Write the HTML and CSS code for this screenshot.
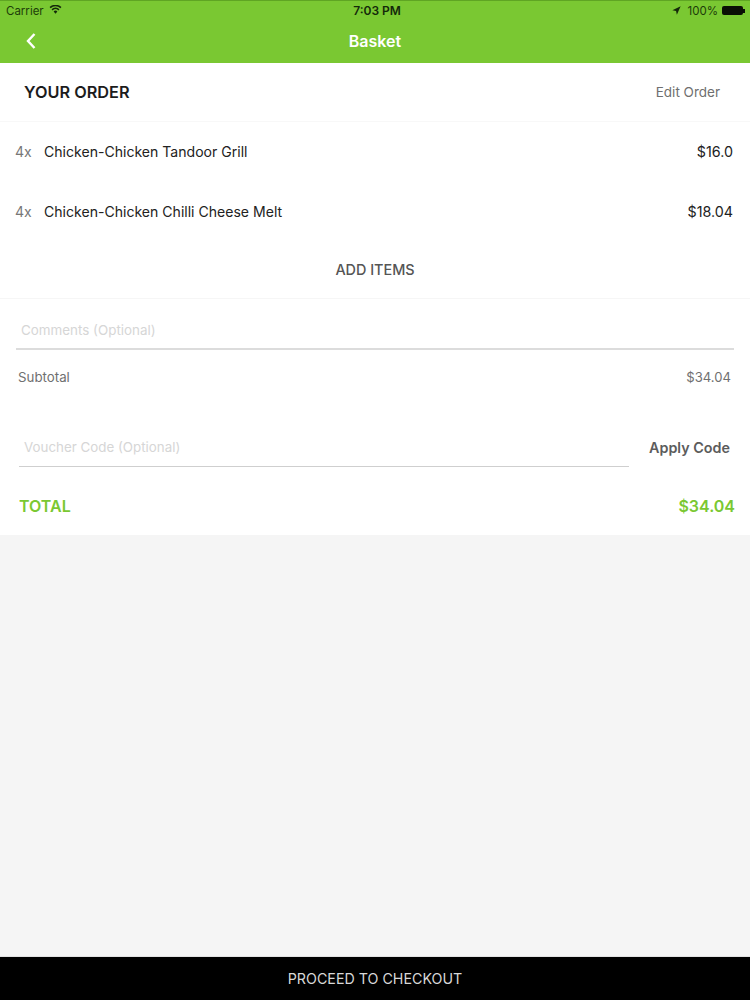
FILE: index.html
```html
<!DOCTYPE html>
<html lang="en">
<head>
<meta charset="utf-8">
<title>Basket</title>
<link rel="stylesheet" href="styles.css">
</head>
<body>
<div class="app">
  <header class="header">
    <div class="status">
      <div class="status-side">
        <span>Carrier</span>
        <svg class="wifi" viewBox="0 0 14 10" width="13" height="9"><path d="M7 9.6 4.9 7.2a3 3 0 0 1 4.2 0zM3.8 6 2.6 4.7a6.3 6.3 0 0 1 8.8 0L10.2 6a4.6 4.6 0 0 0-6.4 0zM1.6 3.6.4 2.3a9.5 9.5 0 0 1 13.2 0l-1.2 1.3a7.8 7.8 0 0 0-10.8 0z"/></svg>
      </div>
      <div class="status-time">7:03 PM</div>
      <div class="status-side status-right">
        <svg class="arrow" viewBox="0 0 10 10" width="9" height="9"><path d="M9.6.4 5.4 9.6 4.5 5.5.4 4.6z"/></svg>
        <span>100%</span>
        <div class="battery"><div class="battery-body"></div><div class="battery-tip"></div></div>
      </div>
    </div>
    <div class="nav">
      <svg class="back" viewBox="0 0 12 18" width="12" height="18"><path d="M9.5 2 3 9l6.500 7" fill="none" stroke="#fff" stroke-width="2.400"/></svg>
      <div class="nav-title">Basket</div>
    </div>
  </header>

  <main class="main">
    <section class="card">
      <div class="order-head">
        <h1 class="order-title">YOUR ORDER</h1>
        <span class="edit">Edit Order</span>
      </div>
      <div class="item">
        <span class="qty">4x</span>
        <span class="name">Chicken-Chicken Tandoor Grill</span>
        <span class="price">$16.0</span>
      </div>
      <div class="item">
        <span class="qty">4x</span>
        <span class="name">Chicken-Chicken Chilli Cheese Melt</span>
        <span class="price">$18.04</span>
      </div>
      <div class="add">ADD ITEMS</div>
      <div class="comments">Comments (Optional)</div>
      <div class="subtotal"><span class="subtotal-label">Subtotal</span><span>$34.04</span></div>
      <div class="voucher">
        <div class="voucher-field">Voucher Code (Optional)</div>
        <span class="apply">Apply Code</span>
      </div>
      <div class="total"><span class="total-label">TOTAL</span><span class="total-value">$34.04</span></div>
    </section>
  </main>

  <footer class="checkout">PROCEED TO CHECKOUT</footer>
</div>
</body>
</html>
```
FILE: styles.css
```css
* { box-sizing: border-box; }
html, body { margin: 0; padding: 0; }
body { font-family: Inter, "Liberation Sans", sans-serif; background: #f5f5f5; }
.app { width: 750px; height: 1000px; display: flex; flex-direction: column; overflow: hidden; }

.header { height: 63px; background: #7ac832; border-top: 1px solid #5fa523; flex: none; }
.status { height: 19px; padding: 0 5px 0 6px; display: flex; align-items: center; justify-content: space-between; position: relative; font-size: 11.500px; color: #1d3d09; }
.status-side { display: flex; align-items: center; gap: 5px; }
.status-right { gap: 4px; }
.status-time { position: absolute; left: 4px; right: 0; text-align: center; font-size: 12px; font-weight: 600; color: #14290a; }
.wifi { fill: #14290a; margin-bottom: 2px; }
.arrow { fill: #14290a; margin-right: 3px; }
.battery { display: flex; align-items: center; }
.battery-body { width: 21px; height: 9px; background: #0a0f05; border-radius: 2px; }
.battery-tip { width: 2px; height: 4px; background: #0a0f05; }

.nav { height: 43px; padding-bottom: 2px; position: relative; display: flex; align-items: center; justify-content: center; }
.back { position: absolute; left: 25px; top: 12px; }
.nav-title { color: #fff; font-size: 16px; font-weight: 600; }

.main { flex: 1; }
.card { background: #fff; height: 472px; display: flex; flex-direction: column; }

.order-head { height: 59px; padding: 0 30px 0 24px; display: flex; align-items: center; justify-content: space-between; border-bottom: 1px solid #f8f8f8; }
.order-title { margin: 0; font-size: 16.300px; font-weight: 600; color: #1c1c1c; }
.edit { font-size: 13.500px; color: #6f6f6f; }

.item { height: 59.400px; padding: 0 17px 0 15px; display: flex; align-items: center; font-size: 14.070px; color: #222; }
.qty { width: 29px; color: #777; }
.name { flex: 1; }
.price { font-size: 14.300px; }

.add { height: 58.200px; padding-top: 1px; display: flex; align-items: center; justify-content: center; font-size: 14.400px; font-weight: 500; color: #555; border-bottom: 1px solid #f6f6f6; }

.comments { margin: 0 16px; height: 51px; padding: 23px 0 0 5px; font-size: 13.400px; color: #d6d6d6; border-bottom: 2px solid #dcdcdc; }
.subtotal { height: 54px; padding: 0 19px 0 18px; margin-bottom: 1px; display: flex; align-items: center; justify-content: space-between; font-size: 13.100px; color: #707070; }
.subtotal-label { font-size: 13.300px; }

.voucher { height: 62px; padding: 0 20px 0 19px; display: flex; align-items: flex-start; justify-content: space-between; }
.voucher-field { width: 610px; height: 62px; padding: 34px 0 0 5px; font-size: 13.350px; color: #d6d6d6; border-bottom: 1px solid #cfcfcf; }
.apply { font-size: 14.350px; font-weight: 600; color: #5c5c5c; padding-top: 34px; }

.total { flex: 1; padding: 10px 15px 0 19px; display: flex; align-items: center; justify-content: space-between; font-size: 16px; font-weight: 600; color: #7ac832; }

.checkout { height: 44px; flex: none; background: #000; border-top: 1px solid #e2e2e2; color: #d8d8d8; font-size: 14.250px; display: flex; align-items: center; justify-content: center; }
```
